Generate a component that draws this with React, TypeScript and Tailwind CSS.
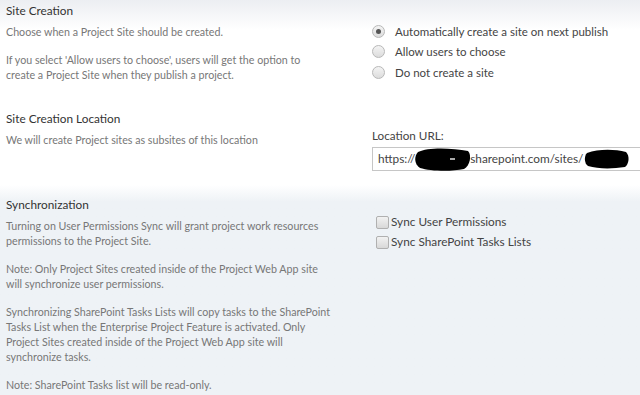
import React from "react";

const FONT = "font-['Segoe_UI','Lato','Open_Sans',sans-serif]";

function Radio({ checked, label }: { checked?: boolean; label: string }) {
  return (
    <div className="flex h-[20.5px] items-center">
      <span className="flex h-[13px] w-[13px] shrink-0 items-center justify-center rounded-full border border-[#b8b8b8] bg-gradient-to-b from-[#f4f4f4] to-[#dcdcdc]">
        {checked && <span className="h-[5px] w-[5px] rounded-full bg-[#555]" />}
      </span>
      <span className="ml-[10px] whitespace-nowrap text-[11.5px] text-[#444]">{label}</span>
    </div>
  );
}

function Checkbox({ label }: { label: string }) {
  return (
    <div className="flex h-[20px] items-center pl-[4px]">
      <span className="h-[13px] w-[13px] shrink-0 rounded-[2px] border border-[#b0b0b0] bg-gradient-to-b from-[#f2f2f2] to-[#d8d8d8]" />
      <span className="ml-[2px] whitespace-nowrap text-[11.8px] text-[#444]">{label}</span>
    </div>
  );
}

function Heading({ children }: { children: React.ReactNode }) {
  return <div className="h-[18px] whitespace-nowrap text-[11.8px] leading-[18px] text-[#333]">{children}</div>;
}

function Para({ children, first }: { children: React.ReactNode; first?: boolean }) {
  return (
    <p className={`${first ? "mt-[4px]" : "mt-[13px]"} whitespace-nowrap text-[10.7px] leading-[15px] text-[#777]`}>
      {children}
    </p>
  );
}

export default function App() {
  return (
    <div className={`${FONT} h-[395px] w-[640px] overflow-hidden bg-white`}>
      {/* Site Creation */}
      <section className="flex h-[100px] bg-gradient-to-b from-[#eceef2] via-white via-30% to-white pt-[2px]">
        <div className="w-[366px] shrink-0 pl-[6px]">
          <Heading>Site Creation</Heading>
          <Para first>Choose when a Project Site should be created.</Para>
          <Para>
            If you select 'Allow users to choose', users will get the option to
            <br />
            create a Project Site when they publish a project.
          </Para>
        </div>
        <div className="pt-[19px] pl-[6px]">
          <Radio checked label="Automatically create a site on next publish" />
          <Radio label="Allow users to choose" />
          <Radio label="Do not create a site" />
        </div>
      </section>

      {/* Site Creation Location */}
      <section className="flex h-[85px] bg-white pt-[10px]">
        <div className="w-[366px] shrink-0 pl-[6px]">
          <Heading>Site Creation Location</Heading>
          <Para first>We will create Project sites as subsites of this location</Para>
        </div>
        <div className="pl-[6px] pt-[18px]">
          <div className="text-[11.7px] leading-[15px] text-[#444]">Location URL:</div>
          <div className="relative mt-[4px] flex h-[24px] w-[290px] items-center border border-[#c6c6c6] bg-white pl-[5px] text-[11.8px] text-[#444]">
            <span>https://</span>
            <span className="ml-[55px] whitespace-nowrap">sharepoint.com/sites/</span>
            <svg className="absolute left-[41px] top-[-2px]" width="58" height="26" viewBox="0 0 58 26">
              <path d="M4 6 C14 1 38 2 54 5 C58 9 56 20 50 23 C36 26 16 25 6 22 C0 18 0 10 4 6 Z" fill="#000" />
              <rect x="36" y="12" width="5" height="2" fill="#aaa" />
            </svg>
            <svg className="absolute left-[211px] top-[1px]" width="46" height="20" viewBox="0 0 46 20">
              <path d="M3 4 C14 0 30 0 42 3 C46 7 45 15 41 18 C28 20 14 20 4 17 C0 14 0 7 3 4 Z" fill="#000" />
            </svg>
          </div>
        </div>
      </section>

      {/* Synchronization */}
      <section className="flex h-[210px] bg-gradient-to-b from-white to-[#eef2f6] to-[8%] pt-[11px]">
        <div className="w-[366px] shrink-0 pl-[6px]">
          <Heading>Synchronization</Heading>
          <Para first>
            Turning on User Permissions Sync will grant project work resources
            <br />
            permissions to the Project Site.
          </Para>
          <Para>
            Note: Only Project Sites created inside of the Project Web App site
            <br />
            will synchronize user permissions.
          </Para>
          <Para>
            Synchronizing SharePoint Tasks Lists will copy tasks to the SharePoint
            <br />
            Tasks List when the Enterprise Project Feature is activated. Only
            <br />
            Project Sites created inside of the Project Web App site will
            <br />
            synchronize tasks.
          </Para>
          <Para>Note: SharePoint Tasks list will be read-only.</Para>
        </div>
        <div className="pl-[6px] pt-[16px]">
          <Checkbox label="Sync User Permissions" />
          <Checkbox label="Sync SharePoint Tasks Lists" />
        </div>
      </section>
    </div>
  );
}
